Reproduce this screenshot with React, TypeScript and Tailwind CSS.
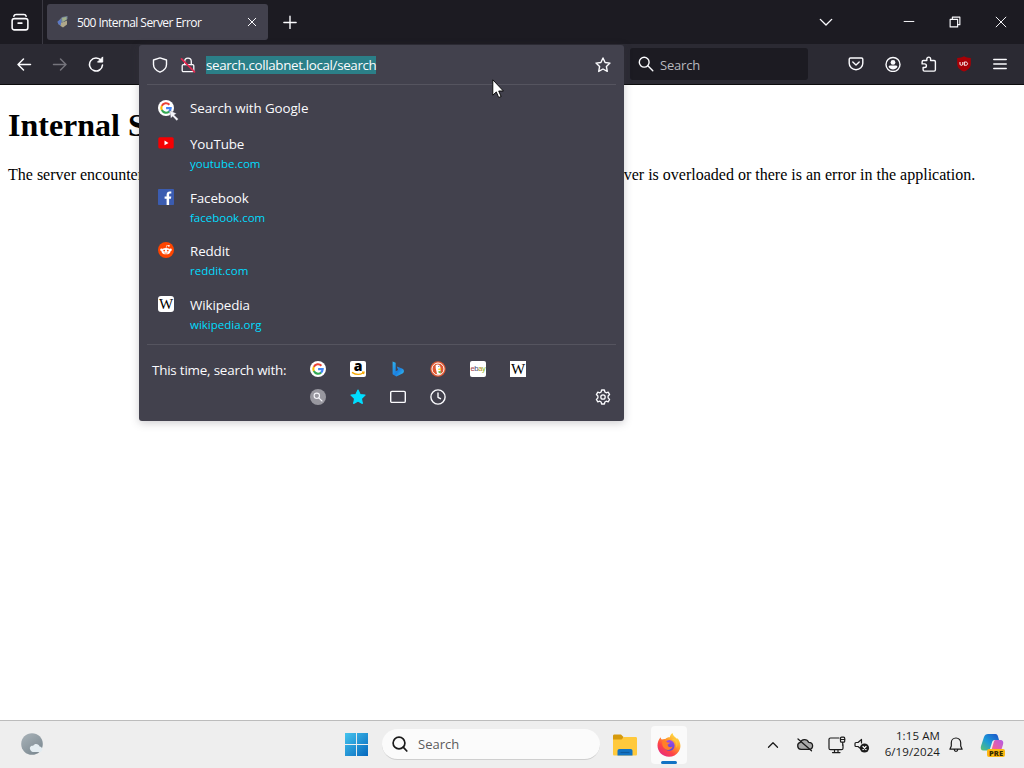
import type { ReactNode } from 'react'

const LINE = {
  fill: 'none',
  stroke: 'currentColor',
  strokeLinecap: 'round' as const,
  strokeLinejoin: 'round' as const,
}

function Icon({ children, className = 'size-4', w = 1.4 }: { children: ReactNode; className?: string; w?: number }) {
  return (
    <svg viewBox="0 0 16 16" className={`block shrink-0 ${className}`} {...LINE} strokeWidth={w}>
      {children}
    </svg>
  )
}

/* ── Site and engine icons ── */
function GoogleIcon() {
  return (
    <svg viewBox="0 0 16 16" className="block size-4">
      <circle cx="8" cy="8" r="8" fill="#fff" />
      <g fill="none" strokeWidth="2.1">
        <path d="M3.8 5.9A4.7 4.7 0 0 1 11.4 4.7" stroke="#ea4335" />
        <path d="M3.8 10.1A4.7 4.7 0 0 1 3.8 5.9" stroke="#fbbc05" />
        <path d="M11.2 11.4A4.7 4.7 0 0 1 3.8 10.1" stroke="#34a853" />
        <path d="M8.1 8.1H12.7A4.7 4.7 0 0 1 11 11.5" stroke="#4285f4" />
      </g>
    </svg>
  )
}

function GoogleCursorIcon() {
  return (
    <div className="relative">
      <GoogleIcon />
      <svg viewBox="0 0 10 11" className="absolute top-2.5 left-[11px] h-[11px] w-2.5">
        <path d="M.6.4l1.2 7.9 1.9-1.9 4 4.3 1.7-1.6-4.2-4 2.3-1.6z" fill="#f4f4fa" stroke="#42414d" strokeWidth=".3" />
      </svg>
    </div>
  )
}

function YoutubeIcon() {
  return (
    <svg viewBox="0 0 16 16" className="block size-4">
      <rect x=".3" y="2.2" width="15.4" height="11.4" rx="1.6" fill="#f60002" />
      <path d="M6.5 5.6v4.6l4-2.3z" fill="#fff" />
    </svg>
  )
}

function FacebookIcon() {
  return (
    <svg viewBox="0 0 16 16" className="block size-4">
      <rect width="16" height="16" rx=".8" fill="#3b5cb0" />
      <path d="M8.6 16V9.8H6.6V7.4h2V5.7c0-2.1 1.2-3.3 3.2-3.3.8 0 1.5.1 1.5.1v2.1h-1c-.9 0-1.2.5-1.2 1.2v1.6H13.3l-.4 2.4h-1.8V16z" fill="#fff" />
    </svg>
  )
}

function RedditIcon() {
  return (
    <svg viewBox="0 0 16 16" className="block size-4">
      <circle cx="8" cy="8" r="8" fill="#ff4500" />
      <g fill="#fff">
        <ellipse cx="8" cy="9.2" rx="4.5" ry="3.1" />
        <circle cx="3.4" cy="7.8" r="1.2" />
        <circle cx="12.6" cy="7.8" r="1.2" />
        <circle cx="10.9" cy="3.8" r=".9" />
      </g>
      <path d="M8.1 6.2l.6-2.8 2.2.5" fill="none" stroke="#fff" strokeWidth=".6" />
      <circle cx="6.2" cy="8.6" r=".9" fill="#ff4500" />
      <circle cx="9.8" cy="8.6" r=".9" fill="#ff4500" />
      <path d="M6.2 10.8q1.8 1 3.6 0" fill="none" stroke="#ff4500" strokeWidth=".6" />
    </svg>
  )
}

function WikipediaIcon({ rounded = false }: { rounded?: boolean }) {
  return (
    <div className={`flex size-4 items-center justify-center overflow-hidden bg-white ${rounded ? 'rounded-[3px]' : ''}`}>
      <span className="font-['Liberation_Serif',serif] text-[15px] leading-4 text-black">W</span>
    </div>
  )
}

function AmazonIcon() {
  return (
    <div className="relative flex size-4 justify-center rounded-[2px] bg-white">
      <span className="font-['Open_Sans',sans-serif] text-[14px] leading-[10px] font-extrabold text-black">a</span>
      <svg viewBox="0 0 16 16" className="absolute inset-0 size-4">
        <path d="M2 11.4q5.8 3.8 11 .6M12 11.2l2-.1-.5 2" fill="none" stroke="#f5a800" strokeWidth="1.3" />
      </svg>
    </div>
  )
}

function BingIcon() {
  return (
    <svg viewBox="0 0 16 16" className="block size-4">
      <defs>
        <linearGradient id="bing" x1="0" y1="0" x2="1" y2="1">
          <stop offset="0" stopColor="#2fb4f0" />
          <stop offset=".55" stopColor="#1b7fe0" />
          <stop offset="1" stopColor="#36c5f0" />
        </linearGradient>
      </defs>
      <path d="M2.6.6l3.1 1.1v8.6l2.4-1.2-1.3-3.6 5.2 2c2.6 1.1 2.4 4 .5 5.1l-6.2 3-3.7-2.4z" fill="url(#bing)" />
    </svg>
  )
}

function DuckIcon() {
  return (
    <svg viewBox="0 0 16 16" className="block size-4">
      <circle cx="8" cy="8" r="7.7" fill="#de5833" />
      <circle cx="8" cy="8" r="6" fill="none" stroke="#fff" strokeWidth="1" />
      <path d="M5.6 4.4c1.4-1.6 4.6-1 4.8 2l.3 6.3c-1.2.8-2.6.9-3.6.6L5.8 7.5z" fill="#fff" />
      <path d="M8.2 7.8l3-.5-.4 1.4-2.4.3z" fill="#fdd20a" />
      <path d="M8.2 10.3l2.6-.3v2.2l-2-.2z" fill="#65bc46" />
      <circle cx="8.8" cy="5.6" r=".5" fill="#2d4f8e" />
    </svg>
  )
}

function EbayIcon() {
  return (
    <div className="flex size-4 items-center justify-center rounded-[2px] bg-white font-['Liberation_Sans',sans-serif] text-[7.5px] leading-none tracking-[-0.3px]">
      <span className="text-[#a0404a]">e</span>
      <span className="text-[#3a4a7a]">b</span>
      <span className="text-[#b08a10]">a</span>
      <span className="text-[#86b817]">y</span>
    </div>
  )
}

function MagnifierBadge() {
  return (
    <svg viewBox="0 0 16 16" className="block size-4">
      <circle cx="8" cy="8" r="8" fill="#98979f" />
      <circle cx="6.8" cy="6.8" r="2.7" fill="none" stroke="#f5f5fa" strokeWidth="1.1" />
      <path d="M8.8 8.8l3.2 3.2" stroke="#f5f5fa" strokeWidth="1.1" strokeLinecap="round" />
    </svg>
  )
}

const STAR = 'M8 1l2.1 4.5 4.9.6-3.6 3.4.9 4.9L8 12l-4.3 2.4.9-4.9L1 6.1l4.9-.6z'

const SITES = [
  { name: 'YouTube', url: 'youtube.com', icon: <YoutubeIcon /> },
  { name: 'Facebook', url: 'facebook.com', icon: <FacebookIcon /> },
  { name: 'Reddit', url: 'reddit.com', icon: <RedditIcon /> },
  { name: 'Wikipedia', url: 'wikipedia.org', icon: <WikipediaIcon rounded /> },
]

const ENGINES = [
  { id: 'google', icon: <GoogleIcon /> },
  { id: 'amazon', icon: <AmazonIcon /> },
  { id: 'bing', icon: <BingIcon /> },
  { id: 'duckduckgo', icon: <DuckIcon /> },
  { id: 'ebay', icon: <EbayIcon /> },
  { id: 'wikipedia', icon: <WikipediaIcon /> },
  { id: 'custom', icon: <MagnifierBadge /> },
  {
    id: 'bookmarks',
    icon: (
      <svg viewBox="0 0 16 16" className="block size-4">
        <path d={STAR} fill="#00ddff" stroke="#00ddff" strokeWidth="1.2" strokeLinejoin="round" />
      </svg>
    ),
  },
  { id: 'tabs', icon: <Icon><rect x=".7" y="2.4" width="14.6" height="11" rx="1.2" /></Icon> },
  { id: 'history', icon: <Icon><circle cx="8" cy="8" r="7.1" /><path d="M8 4v4.3l2.5 1.4" /></Icon> },
]

/* ── Address bar with its open results ── */
function UrlBar() {
  return (
    <div className="absolute top-[45px] left-[139px] flex h-[376px] w-[485px] flex-col rounded-[3px] bg-[#42414d] text-[#fbfbfe] shadow-[0_2px_8px_rgba(58,57,68,0.25)]">
      <div className="flex h-[39px] shrink-0 items-center px-[13px]">
        <Icon><path d="M8 .9L1.5 3v4.600c0 3.600 2.800 6.200 6.500 7.600 3.700-1.400 6.500-4 6.500-7.600V3z" /></Icon>
        <Icon className="ml-3 size-4" w={1.3}>
          <rect x="2.2" y="7.6" width="11.6" height="7" rx="1.2" />
          <path d="M4.7 7.500V4.400a3.300 3.300 0 0 1 6.600 0v3.100" />
          <path d="M1.500 1.800l13 13" stroke="#e22850" strokeWidth="1.7" />
        </Icon>
        <span className="ml-[10px] h-[18px] bg-[#2b7f88] text-[13.4px] leading-[19px] tracking-[-0.36px]">search.collabnet.local/search</span>
        <Icon className="ml-auto size-4"><path d={STAR} /></Icon>
      </div>
      <div className="mx-2 h-px shrink-0 bg-[#55545f]" />

      <div className="flex h-[46px] shrink-0 items-center pl-[19px]">
        <GoogleCursorIcon />
        <span className="ml-4 text-[13.4px] leading-5 tracking-[-0.1px]">Search with Google</span>
      </div>
      {SITES.map(({ name, url, icon }) => (
        <div key={name} className="flex h-[53.5px] shrink-0 pt-[3px] pl-[19px]">
          <div className="pt-px">{icon}</div>
          <div className="ml-4">
            <p className="text-[13.4px] leading-5 tracking-[-0.12px]">{name}</p>
            <p className="text-[11.5px] leading-5 text-[#00ddff]">{url}</p>
          </div>
        </div>
      ))}

      <div className="mx-2 -mt-px h-px shrink-0 bg-[#55545f]" />
      <div className="flex items-end pt-[10px] px-[13px]">
        <span className="mb-[29px] w-[146px] text-[13.4px] leading-6 tracking-[-0.2px] whitespace-nowrap">This time, search with:</span>
        <div className="grid grid-cols-6">
          {ENGINES.map(({ id, icon }) => (
            <div key={id} className="flex h-7 w-10 items-center justify-center">{icon}</div>
          ))}
        </div>
        <div className="mb-1.5 ml-auto">
          <Icon w={1.3}>
            <path d="M6.6 1h2.800l.5 2 1.300.8 2-.6 1.400 2.400-1.500 1.400v1.900l1.500 1.500-1.400 2.400-2-.6-1.300.8-.5 2H6.600l-.5-2-1.300-.8-2 .6-1.400-2.400 1.500-1.500V7L1.400 5.600l1.400-2.400 2 .6L6.100 3z" />
            <circle cx="8" cy="8" r="2.2" />
          </Icon>
        </div>
      </div>
    </div>
  )
}

function TabStrip() {
  return (
    <div className="flex h-11 items-center bg-[#1c1b22]">
      <div className="flex h-11 w-[43px] items-center border-r border-[#3a3942] pl-[11px]">
        <Icon className="size-[18px]" w={1.4}>
          <rect x="1" y="5" width="14" height="10" rx="2" />
          <path d="M2.500 2.900c.3-1 .9-1.500 2-1.500h7c1.100 0 1.700.5 2 1.500M6.300 9h3.400" />
        </Icon>
      </div>
      <div className="ml-1 flex h-9 w-[221px] items-center rounded-[3px] bg-[#42414d] pr-[11px] pl-[9px]">
        <svg viewBox="0 0 14 14" className="size-3.5 shrink-0">
          <path d="M1.500 7L6 2l5.500-1v3L6.500 7.500 5 11 2.500 9.500z" fill="#70809a" />
          <path d="M6 3l4.500-1.200v3L6.500 7z" fill="#a0b08a" />
          <path d="M5 8l6-2.500v4L7 12.500 4.500 11z" fill="#b0a88a" />
          <path d="M1.500 6.500L5 4.500v5.500L2.500 9z" fill="#5a78c8" />
        </svg>
        <span className="ml-[7px] pt-0.5 text-[12px] tracking-[-0.55px] whitespace-nowrap">500 Internal Server Error</span>
        <Icon className="ml-auto size-[10px]" w={1.6}><path d="M2 2l12 12M14 2L2 14" /></Icon>
      </div>
      <Icon className="ml-[15px] size-3.5" w={1.6}><path d="M8 1.500v14M1 8.500h14" /></Icon>
      <Icon className="ml-auto size-3.5" w={1.6}><path d="M1.500 5L8 11.500 14.500 5" /></Icon>
      <div className="ml-[53px] flex w-[138px] items-center">
        <div className="flex w-[46px] justify-center"><Icon className="size-3" w={1.3}><path d="M1.500 7.300h13" /></Icon></div>
        <div className="flex w-[46px] justify-center">
          <Icon className="size-3" w={1.5}>
            <rect x="1.5" y="4.5" width="10" height="10" />
            <path d="M4.500 4.500v-3h10v10h-3" />
          </Icon>
        </div>
        <div className="flex w-[46px] justify-center"><Icon className="size-3" w={1.3}><path d="M1.500 1.500l13 13M14.500 1.500l-13 13" /></Icon></div>
      </div>
    </div>
  )
}

function Toolbar() {
  return (
    <div className="flex h-[41px] items-center border-b border-[#0c0c0d] bg-[#2b2a33]">
      <div className="flex w-[139px] gap-5 pl-4">
        <Icon w={1.5}><path d="M14.500 8.500H2M7.500 3L2 8.500 7.500 14" /></Icon>
        <Icon className="size-4 text-[#75747c]" w={1.5}><path d="M1.500 8.500H14M8.500 3L14 8.500 8.500 14" /></Icon>
        <Icon w={1.6}>
          <path d="M13.200 4.600A6.500 6.500 0 1 0 14.500 9" />
          <path d="M14.700 1.300v4.800H9.900z" fill="currentColor" strokeWidth="1" />
        </Icon>
      </div>
      <div className="ml-[491px] flex h-8 w-[178px] items-center rounded-[3px] bg-[#1c1b22] pl-2">
        <Icon><circle cx="6.2" cy="6.2" r="4.9" /><path d="M9.800 9.800l5 5" /></Icon>
        <span className="ml-[6px] pt-[3px] text-[13px] tracking-[-0.2px] text-[#b8b8be]">Search</span>
      </div>
      <div className="ml-10 flex gap-5">
        <Icon>
          <path d="M2.500 2h11c.8 0 1.300.5 1.300 1.300v3.900c0 3.600-3 6.600-6.800 6.600S1.200 10.800 1.200 7.200V3.300C1.200 2.500 1.700 2 2.500 2z" />
          <path d="M4.800 6L8 9l3.200-3" />
        </Icon>
        <Icon className="ml-px size-4">
          <circle cx="8" cy="8.500" r="7" />
          <circle cx="8" cy="6.400" r="2.4" fill="currentColor" stroke="none" />
          <path d="M3.600 11c0-1 .8-1.500 1.600-1.500h5.600c.8 0 1.600.5 1.600 1.500a5.200 5.200 0 0 1-8.800 0z" fill="currentColor" stroke="none" />
        </Icon>
        <Icon>
          <path d="M5.800 4.500V3a1.900 1.900 0 0 1 3.800 0v1.500h3.500c.8 0 1.300.5 1.300 1.300v8c0 .8-.5 1.300-1.300 1.300H3.400c-.8 0-1.300-.5-1.300-1.300v-2.300h1.500a1.600 1.600 0 0 0 0-3.600H1.100V6c0-.9.500-1.500 1.300-1.500z" />
        </Icon>
        <svg viewBox="0 0 16 16" className="-ml-px size-4">
          <path d="M8 .3c2 1.300 4 1.600 6.800 1.700v5.500c0 4-2.600 6.500-6.800 8-4.200-1.500-6.800-4-6.800-8V2C4 1.900 6 1.600 8 .3z" fill="#a80006" />
          <path d="M4 6v2.200c0 1.500 2.800 1.500 2.800 0V6M8.300 6v3.300h1.200c2.800 0 2.800-3.300 0-3.300z" fill="none" stroke="#fff" strokeWidth="1" />
        </svg>
        <Icon w={1.5}><path d="M1.800 3.500h12.400M1.800 8h12.400M1.800 12.500h12.400" /></Icon>
      </div>
    </div>
  )
}

function FirefoxLogo() {
  return (
    <svg viewBox="0 0 24 24" className="size-6 shrink-0">
      <defs>
        <linearGradient id="fox" x1=".85" y1=".05" x2=".2" y2=".95">
          <stop offset="0" stopColor="#ffe84a" />
          <stop offset=".4" stopColor="#ff9a2a" />
          <stop offset=".7" stopColor="#ff4545" />
          <stop offset="1" stopColor="#e62a80" />
        </linearGradient>
        <linearGradient id="globe" x1="0" y1="0" x2="0" y2="1">
          <stop offset="0" stopColor="#a04ae8" />
          <stop offset="1" stopColor="#5b46d8" />
        </linearGradient>
      </defs>
      <path d="M3.600 4.200c.1 1.100.6 1.900 1.200 2.400 1-.6 2.400-.8 3.500-.6C9.600 4.800 11 4.200 12.800 4.300 13.100 2.500 14.100 1 15.600 0c.2 3 3.200 4.300 4.700 6.100l.2-1.200c3.400 4.500 3.900 9.500 1.200 13.600C19.500 22 16 23.700 12 23.700 5.500 23.700.5 18.800.5 12.600c0-3.400 1.200-6.400 3.100-8.400z" fill="url(#fox)" />
      <circle cx="12.3" cy="12.4" r="5.3" fill="url(#globe)" />
      <path d="M5.500 8c2-.8 3.800-.2 5 1.400l2.500.2c-.2 1.200-1.300 1.500-2.300 2-.4 2.400 2.600 3.200 5 2-1.500 3.700-5.900 4.700-8.700 1.500C5 13 5 10.500 5.500 8z" fill="#ff8029" />
      <path d="M14.500 6.500c4 .7 5.800 4.300 4.600 8.200 2.400-3 1.700-7.100-1.200-9.300z" fill="#ffc83a" />
    </svg>
  )
}

function Taskbar() {
  return (
    <div className="flex h-12 items-center border-t border-[#bcbcbc] bg-[#eeeeee] text-[#1b1b1b]">
      <div className="w-[345px] shrink-0 pb-px pl-5">
        <svg viewBox="0 0 24 24" className="size-6">
          <defs>
            <linearGradient id="moon" x1="0" y1="0" x2=".7" y2="1">
              <stop offset="0" stopColor="#aab4ba" />
              <stop offset="1" stopColor="#7d8a92" />
            </linearGradient>
          </defs>
          <circle cx="12" cy="12" r="10.8" fill="url(#moon)" />
          <path d="M10.500 18c-1.800-3 .8-4.800 2.700-4.200 1.300-2.800 5.700-2.200 6.400.7 3 0 3.600 4.800.7 5.500h-7.500c-1.100 0-1.900-1.100-2.300-2z" fill="#e4edf2" />
        </svg>
      </div>
      <svg viewBox="0 0 24 24" className="mb-px size-[23px] shrink-0">
        <defs>
          <linearGradient id="win" x1="0" y1="0" x2="1" y2="1">
            <stop offset="0" stopColor="#45c4ee" />
            <stop offset="1" stopColor="#0567bd" />
          </linearGradient>
        </defs>
        <path d="M0 0h11.500v11.500H0zM12.500 0H24v11.500H12.500zM0 12.500h11.500V24H0zM12.500 12.500H24V24H12.500z" fill="url(#win)" />
      </svg>
      <div className="ml-[14px] flex h-[31px] w-[218px] shrink-0 items-center rounded-full border-b border-[#cfcfcf] bg-[#fbfbfb] pl-[10px]">
        <Icon className="size-4" w={1.7}><circle cx="7" cy="7" r="5.9" /><path d="M11.200 11.200l3.600 3.800" /></Icon>
        <span className="ml-[10px] pt-px text-[13px] text-[#5c5c5c]">Search</span>
      </div>
      <svg viewBox="0 0 26 24" className="ml-3 h-6 w-[26px] shrink-0">
        <path d="M1 3c0-1 .5-1.500 1.500-1.500H9L11.500 4v3H1z" fill="#d69a0c" />
        <path d="M1 6.500h8.500L12 4h11.500c1 0 1.500.5 1.500 1.500V21c0 1-.5 1.500-1.500 1.500h-21C1.500 22.500 1 22 1 21z" fill="#ffc93c" />
        <path d="M5.500 22.500V18c0-1.300.7-2 2-2h11c1.300 0 2 .7 2 2v4.500z" fill="#1273c4" />
        <path d="M8.500 19.500h9" stroke="#0d5a9e" strokeWidth="1.2" />
      </svg>
      <div className="ml-[13px] flex h-[38px] w-9 shrink-0 flex-col items-center justify-end rounded bg-[#fafafa]">
        <FirefoxLogo />
        <div className="mt-1 h-[3px] w-4 shrink-0 rounded-full bg-[#1273c4]" />
      </div>
      <div className="ml-auto flex items-center">
        <Icon className="size-3" w={1.7}><path d="M2 11l6-6 6 6" /></Icon>
        <svg viewBox="0 0 18 16" className="ml-[17px] h-4 w-[18px]" {...LINE} strokeWidth="1.3">
          <path d="M5 12.300a3.500 3.500 0 0 1-.6-6.900C5.300 2 11 1.500 12.600 5.300c5.200 0 5.300 7 .6 7z" fill="#aaa" />
          <path d="M2 2l13.500 11.800" />
        </svg>
        <svg viewBox="0 0 18 18" className="ml-[14px] size-[18px]" {...LINE} strokeWidth="1.2">
          <path d="M11 2H2.500C1.600 2 1 2.600 1 3.500v8.700c0 .9.600 1.500 1.500 1.500h11c.9 0 1.500-.6 1.500-1.500V8.500M6.500 14v2.500M10 14v2.500M4.500 16.600H12M14.700 6.500v3" />
          <rect x="12.5" y="1.2" width="4.2" height="5" rx="1" />
          <path d="M12.500 3.500h4.200" />
        </svg>
        <svg viewBox="0 0 16 16" className="ml-2 size-4" {...LINE} strokeWidth="1.2">
          <path d="M7 12L4 9.500H2c-.6 0-1-.4-1-1v-2c0-.6.400-1 1-1h2L7.500 2.500V6" />
          <circle cx="10.5" cy="11" r="4.6" fill="#1b1b1b" stroke="none" />
          <path d="M9 9.500l3 3M12 9.500l-3 3" stroke="#fff" />
        </svg>
        <div className="mb-0.5 ml-[12px] w-[58px] text-right text-[11.5px] leading-4 tracking-[0.1px] whitespace-nowrap">
          <p>1:15 AM</p>
          <p>6/19/2024</p>
        </div>
        <Icon className="ml-[8px] size-4" w={1.2}>
          <path d="M8 1c-2.800 0-4.700 2.100-4.700 4.800v3.300L1.900 12.200h12.200L12.700 9.100V5.800C12.700 3.100 10.800 1 8 1zM6.200 12.500c.2 2.400 3.400 2.400 3.600 0" />
        </Icon>
        <div className="relative mr-5 ml-4 size-6">
          <svg viewBox="0 0 24 24" className="size-6">
            <defs>
              <linearGradient id="copilotBlue" x1="0" y1="1" x2="1" y2="0">
                <stop offset="0" stopColor="#5fc46c" />
                <stop offset=".45" stopColor="#1c9bd8" />
                <stop offset="1" stopColor="#1b50c8" />
              </linearGradient>
              <linearGradient id="copilotPink" x1="1" y1="0" x2="0" y2="1">
                <stop offset="0" stopColor="#b05ce8" />
                <stop offset=".6" stopColor="#f0609a" />
                <stop offset="1" stopColor="#f8a04a" />
              </linearGradient>
            </defs>
            <path d="M8 1h7.500c1.500 0 2 1 2.500 2.500L19 7h-4c-2 0-2.600 1-3 2.500L10.300 15c-.5 1.600-1.300 2.500-3 2.500H3.500C1 17.500.3 15.500 1 13L4 4c.7-2 2-3 4-3z" fill="url(#copilotBlue)" />
            <path d="M15.500 7H20c3 0 3.800 2 3 4.500l-2.500 8c-.6 1.800-1.800 2.500-3.500 2.500h-7l3.500-12c.5-1.800 1-3 2-3z" fill="url(#copilotPink)" />
          </svg>
          <span className="absolute -right-px bottom-0 rounded-[2px] bg-[#fdb913] px-[2px] text-[7.5px] leading-[8px] font-extrabold text-[#3a2c00]">PRE</span>
        </div>
      </div>
    </div>
  )
}

export default function App() {
  return (
    <div className="relative flex h-screen w-full flex-col overflow-hidden bg-white font-['Open_Sans','Noto_Sans',sans-serif] text-[#fbfbfe]">
      <TabStrip />
      <Toolbar />
      <main className="flex-1 bg-white pt-[22px] pl-2 font-['Liberation_Serif',serif] text-black">
        <h1 className="text-[32px] leading-[37px] font-bold">Internal Server Error</h1>
        <p className="mt-[22px] text-[16px] leading-[18px] whitespace-nowrap">
          The server encountered an internal error and was unable to complete your request. Either the server is overloaded or there is an error in the application.
        </p>
      </main>
      <Taskbar />
      <UrlBar />

      {/* mouse pointer */}
      <svg viewBox="0 0 12 20" className="absolute top-[79px] left-[492px] h-5 w-3">
        <path d="M.8.8v15.400l3.500-3.300 2.400 5.600 2.400-1-2.400-5.500h4.700z" fill="#fff" stroke="#000" strokeWidth=".9" />
      </svg>
    </div>
  )
}
